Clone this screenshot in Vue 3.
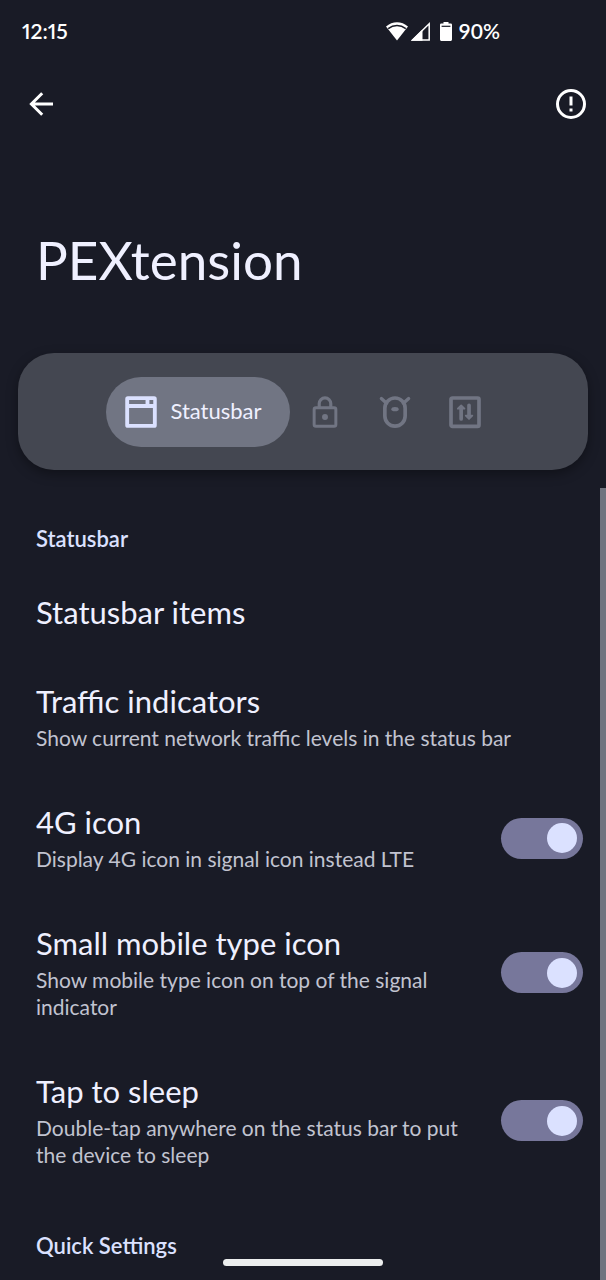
<script setup>
import { ref } from 'vue'

const activeTab = ref('statusbar')
const tabs = [
  { id: 'statusbar', label: 'Statusbar' },
  { id: 'lockscreen', label: 'Lockscreen' },
  { id: 'system', label: 'System' },
  { id: 'tuning', label: 'Tuning' },
]

const items = ref([
  { id: 'items', title: 'Statusbar items' },
  {
    id: 'traffic',
    title: 'Traffic indicators',
    summary: 'Show current network traffic levels in the status bar',
  },
  {
    id: 'lte',
    title: '4G icon',
    summary: 'Display 4G icon in signal icon instead LTE',
    toggle: true,
    on: true,
  },
  {
    id: 'mobile-type',
    title: 'Small mobile type icon',
    summary: 'Show mobile type icon on top of the signal indicator',
    toggle: true,
    on: true,
  },
  {
    id: 'sleep',
    title: 'Tap to sleep',
    summary: 'Double-tap anywhere on the status bar to put the device to sleep',
    toggle: true,
    on: true,
  },
])
</script>

<template>
  <div class="screen">
    <div class="system-bar">
      <span class="clock">12:15</span>
      <div class="system-icons">
        <svg class="wifi" viewBox="0 0 22 19" aria-hidden="true">
          <path d="M0 4.5C6.5-1.3 15.5-1.3 22 4.5L11 18.5Z" fill="currentColor" />
          <path d="M2.2 6.6C7.6 2.4 14.4 2.4 19.8 6.6" fill="none" stroke="#191b26" stroke-width="1.5" />
        </svg>
        <svg class="signal" viewBox="0 0 20 19" aria-hidden="true">
          <path d="M1.5 18L18.2 1.8V18Z" fill="none" stroke="currentColor" stroke-width="1.5" />
          <path d="M0 18.7L11.5 7.5V18.7Z" fill="currentColor" />
        </svg>
        <svg class="battery" viewBox="0 0 12 19" aria-hidden="true">
          <path d="M3.5 0H8.5V1.5H10.8Q12 1.5 12 2.7V17.6Q12 19 10.8 19H1.2Q0 19 0 17.6V2.7Q0 1.5 1.2 1.5H3.5Z" fill="currentColor" />
          <path d="M1.6 4.3H10.4" stroke="#191b26" stroke-width="1.2" />
        </svg>
        <span class="charge">90%</span>
      </div>
    </div>

    <header>
      <div class="toolbar">
        <button class="icon-button" type="button" aria-label="Back">
          <svg viewBox="0 0 24 24" aria-hidden="true">
            <path d="M20 12H6.2M12.8 4.8L5.6 12L12.8 19.2" fill="none" stroke="currentColor" stroke-width="2" />
          </svg>
        </button>
        <button class="icon-button" type="button" aria-label="About">
          <svg viewBox="0 0 24 24" aria-hidden="true">
            <circle cx="12" cy="12" r="9" fill="none" stroke="currentColor" stroke-width="2" />
            <path d="M12 7V13M12 15V17" stroke="currentColor" stroke-width="2" />
          </svg>
        </button>
      </div>
      <h1>PEXtension</h1>
    </header>

    <nav class="tabs">
      <button
        v-for="tab in tabs"
        :key="tab.id"
        type="button"
        class="tab"
        :class="{ active: tab.id === activeTab }"
        :aria-label="tab.label"
        @click="activeTab = tab.id"
      >
        <svg viewBox="0 0 24 24" fill="none" stroke="currentColor" stroke-width="2" aria-hidden="true">
          <template v-if="tab.id === 'statusbar'">
            <path
              d="M4.5 3H19.5Q21 3 21 4.5V19.5Q21 21 19.5 21H4.5Q3 21 3 19.5V4.5Q3 3 4.5 3ZM5.2 5.1V7.4H14.6V5.1ZM16.8 5.1V7.4H19V5.1ZM5.2 9.7V18.8H18.8V9.7Z"
              fill="currentColor"
              fill-rule="evenodd"
              stroke="none"
            />
          </template>
          <template v-else-if="tab.id === 'lockscreen'">
            <rect x="5.8" y="9.6" width="12.4" height="10.6" rx="1" stroke-width="1.7" />
            <path d="M8.7 9.6V7.2A3.3 3.3 0 0 1 15.3 7.2V9.6" stroke-width="1.8" />
            <circle cx="12" cy="14.8" r="1.7" fill="currentColor" stroke="none" />
          </template>
          <template v-else-if="tab.id === 'system'">
            <rect x="6.2" y="4" width="11.6" height="16.1" rx="5.8" stroke-width="2.1" />
            <path d="M4.2 4.3L7.2 7M19.8 4.3L16.8 7" stroke-linecap="round" stroke-width="1.9" />
            <ellipse cx="12" cy="10.4" rx="2.1" ry="1.2" fill="currentColor" stroke="none" />
          </template>
          <template v-else>
            <rect x="4" y="4" width="16" height="16.2" rx="0.8" stroke-width="2.1" />
            <path d="M9.8 16V10M14.3 8.2V14" stroke-linecap="round" stroke-width="2.1" />
            <path
              d="M9.8 8.2L11.7 10.1H7.9ZM14.3 16L16.2 14.1H12.4Z"
              fill="currentColor"
              stroke-linejoin="round"
              stroke-width="1"
            />
          </template>
        </svg>
        <span v-if="tab.id === activeTab">{{ tab.label }}</span>
      </button>
    </nav>

    <div class="scroller">
      <main>
        <h2>Statusbar</h2>
        <component
          :is="item.toggle ? 'label' : 'button'"
          v-for="item in items"
          :key="item.id"
          class="item"
          :for="item.toggle ? item.id : undefined"
        >
          <span class="copy">
            <span class="title">{{ item.title }}</span>
            <span v-if="item.summary" class="summary">{{ item.summary }}</span>
          </span>
          <input v-if="item.toggle" :id="item.id" v-model="item.on" type="checkbox" role="switch" />
        </component>
        <h2>Quick Settings</h2>
      </main>
      <div class="scrollbar"></div>
    </div>
    <div class="home-handle"></div>
  </div>
</template>

<style>
body {
  background: #191b26;
}
</style>

<style scoped>
.screen {
  display: flex;
  flex-direction: column;
  min-height: 100vh;
  background: #191b26;
  color: #eff0ff;
  font-family: Lato, "Open Sans", sans-serif;
}

button {
  border: 0;
  padding: 0;
  background: none;
  color: inherit;
  font: inherit;
  text-align: left;
  cursor: pointer;
}

svg {
  display: block;
}

.system-bar {
  display: flex;
  align-items: center;
  justify-content: space-between;
  height: 62px;
  padding: 0 106px 0 22px;
  color: #fff;
  font-size: 21px;
  font-weight: 600;
  line-height: 24px;
}

.clock {
  font-variant-numeric: proportional-nums;
}

.system-icons {
  display: flex;
  align-items: center;
}

.wifi {
  width: 22px;
  height: 19px;
}

.signal {
  width: 20px;
  height: 19px;
  margin-left: 3px;
}

.battery {
  width: 12px;
  height: 19px;
  margin: 0 7px 0 9px;
}

.toolbar {
  display: flex;
  align-items: center;
  justify-content: space-between;
  height: 84px;
  padding: 0 17px 0 23px;
}

.icon-button {
  color: #fff;
}

.icon-button svg {
  width: 36px;
  height: 36px;
}

h1 {
  margin: 82px 36px 61px;
  font-size: 53px;
  font-weight: 400;
  line-height: 64px;
}

.tabs {
  display: flex;
  align-items: center;
  justify-content: center;
  margin: 0 18px 18px;
  padding: 24px 0 23px;
  border-radius: 36px;
  background: #444751;
  box-shadow: 0 4px 12px rgba(0, 0, 0, 0.35);
}

.tab {
  display: flex;
  align-items: center;
  gap: 8px;
  height: 70px;
  padding: 0 14px;
  border-radius: 35px;
  color: #717583;
}

.tab.active {
  padding-right: 28px;
  background: #717583;
  color: #dbe1ff;
}

.tab svg {
  width: 42px;
  height: 42px;
}

.tab span {
  padding-bottom: 4px;
  color: #eff0ff;
  font-size: 22px;
}

.scroller {
  display: flex;
  flex: 1;
}

main {
  display: flex;
  flex: 1;
  flex-direction: column;
}

h2 {
  margin: 0;
  padding: 38px 36px 15px;
  color: #dbe1ff;
  font-size: 22px;
  font-weight: 600;
  line-height: 26px;
}

.item {
  display: flex;
  box-sizing: border-box;
  align-items: center;
  gap: 32px;
  min-height: 90px;
  padding: 26px 17px 27px 36px;
}

.copy {
  display: flex;
  flex: 1;
  flex-direction: column;
  gap: 5px;
}

.title {
  font-size: 31px;
  line-height: 36px;
}

.summary {
  color: #c1c3d0;
  font-size: 21px;
  line-height: 27px;
}

input {
  display: flex;
  flex: none;
  align-items: center;
  justify-content: flex-end;
  width: 82px;
  height: 41px;
  margin: 0;
  padding: 0 6px;
  border-radius: 21px;
  background: #77779b;
  appearance: none;
}

input::before {
  width: 30px;
  height: 30px;
  border-radius: 50%;
  background: #dbe1ff;
  content: "";
}

input:not(:checked) {
  justify-content: flex-start;
}

.scrollbar {
  width: 6px;
  background: #70737f;
}

.home-handle {
  position: fixed;
  bottom: 14px;
  left: 50%;
  width: 160px;
  height: 7px;
  margin-left: -80px;
  border-radius: 4px;
  background: #eceeee;
}
</style>
